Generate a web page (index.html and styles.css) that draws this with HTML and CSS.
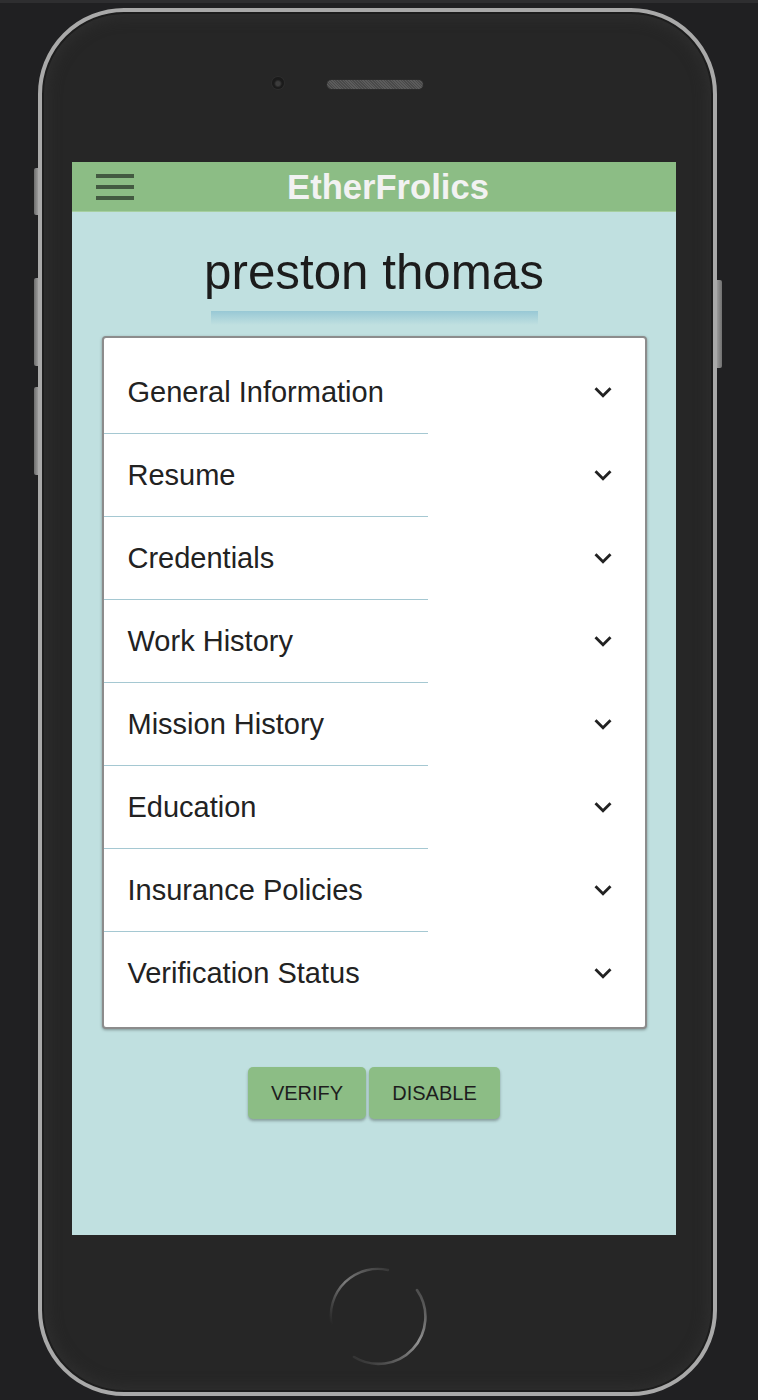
FILE: index.html
```html
<!DOCTYPE html>
<html>
<head>
<meta charset="utf-8">
<link rel="stylesheet" href="styles.css">
</head>
<body>
<div class="topstrip"></div>
<div class="phone">
  <div class="side side-l1"></div>
  <div class="side side-l2"></div>
  <div class="side side-l3"></div>
  <div class="side side-r1"></div>
  <div class="phone-top">
    <div class="camera"></div>
    <div class="speaker"></div>
  </div>
  <div class="screen">
    <header class="appbar">
      <div class="hamburger"><span></span><span></span><span></span></div>
      <div class="brand">EtherFrolics</div>
    </header>
    <main class="content">
      <h1 class="name">preston thomas</h1>
      <div class="name-bar"></div>
      <div class="card">
        <div class="item"><span class="label">General Information</span><svg class="chev" viewBox="0 0 24 24"><path d="M16.59 8.59L12 13.17 7.41 8.59 6 10l6 6 6-6z"/></svg></div>
        <div class="item"><span class="label">Resume</span><svg class="chev" viewBox="0 0 24 24"><path d="M16.59 8.59L12 13.17 7.41 8.59 6 10l6 6 6-6z"/></svg></div>
        <div class="item"><span class="label">Credentials</span><svg class="chev" viewBox="0 0 24 24"><path d="M16.59 8.59L12 13.17 7.41 8.59 6 10l6 6 6-6z"/></svg></div>
        <div class="item"><span class="label">Work History</span><svg class="chev" viewBox="0 0 24 24"><path d="M16.59 8.59L12 13.17 7.41 8.59 6 10l6 6 6-6z"/></svg></div>
        <div class="item"><span class="label">Mission History</span><svg class="chev" viewBox="0 0 24 24"><path d="M16.59 8.59L12 13.17 7.41 8.59 6 10l6 6 6-6z"/></svg></div>
        <div class="item"><span class="label">Education</span><svg class="chev" viewBox="0 0 24 24"><path d="M16.59 8.59L12 13.17 7.41 8.59 6 10l6 6 6-6z"/></svg></div>
        <div class="item"><span class="label">Insurance Policies</span><svg class="chev" viewBox="0 0 24 24"><path d="M16.59 8.59L12 13.17 7.41 8.59 6 10l6 6 6-6z"/></svg></div>
        <div class="item"><span class="label">Verification Status</span><svg class="chev" viewBox="0 0 24 24"><path d="M16.59 8.59L12 13.17 7.41 8.59 6 10l6 6 6-6z"/></svg></div>
      </div>
      <div class="actions">
        <button class="btn btn-verify">VERIFY</button>
        <button class="btn btn-disable">DISABLE</button>
      </div>
    </main>
  </div>
  <div class="phone-bottom">
    <svg class="home" viewBox="0 0 100 100">
      <defs>
        <linearGradient id="g1" x1="0" y1="1" x2="1" y2="0">
          <stop offset="0" stop-color="#6a6a6a" stop-opacity="0"/>
          <stop offset="0.5" stop-color="#7c7c7c"/>
          <stop offset="1" stop-color="#7c7c7c" stop-opacity="0.2"/>
        </linearGradient>
        <linearGradient id="g2" x1="1" y1="0" x2="0" y2="1">
          <stop offset="0" stop-color="#8a8a8a" stop-opacity="0.3"/>
          <stop offset="0.4" stop-color="#939393"/>
          <stop offset="1" stop-color="#7a7a7a" stop-opacity="0.1"/>
        </linearGradient>
      </defs>
      <path d="M3.5 58 A47 47 0 0 1 60 4" fill="none" stroke="url(#g1)" stroke-width="2.4" stroke-linecap="round"/>
      <path d="M89 24 A47 47 0 0 1 26 91" fill="none" stroke="url(#g2)" stroke-width="2.6" stroke-linecap="round"/>
    </svg>
  </div>
</div>
</body>
</html>
```
FILE: styles.css
```css
html, body {
  margin: 0;
  padding: 0;
}
body {
  background: #202022;
  width: 758px;
  height: 1400px;
  overflow: hidden;
  font-family: "Liberation Sans", Arial, sans-serif;
}
.topstrip {
  height: 3px;
  background: #2e2e30;
}
.phone {
  position: relative;
  box-sizing: border-box;
  margin: 5px 0 0 38px;
  width: 679px;
  height: 1388px;
  border: 4px solid #a9a9a9;
  border-radius: 86px;
  background: #262626;
  box-shadow: inset 0 0 0 2px #1d1d1d, inset 0 0 14px 5px #2f2f2f;
}
.side {
  position: absolute;
  width: 4px;
  background: linear-gradient(to right, #6e6e6e, #9a9a9a);
  border-radius: 2px 0 0 2px;
}
.side-l1 { left: -8px; top: 156px; height: 47px; }
.side-l2 { left: -8px; top: 266px; height: 88px; }
.side-l3 { left: -8px; top: 375px; height: 88px; }
.side-r1 {
  right: -9px;
  top: 268px;
  height: 88px;
  width: 5px;
  border-radius: 0 2px 2px 0;
  background: linear-gradient(to right, #9a9a9a, #707070);
}
.phone-top {
  height: 150px;
  box-sizing: border-box;
  padding: 65px 0 0 230px;
  display: flex;
  align-items: flex-start;
  gap: 43px;
}
.camera {
  width: 12px;
  height: 12px;
  border-radius: 50%;
  background: radial-gradient(circle at 50% 55%, #3c3c3c 0 22%, #1c1c1c 45%, #161616 100%);
  box-shadow: 0 0 0 1px #2d2d2d;
}
.speaker {
  margin-top: 3px;
  width: 96px;
  height: 9px;
  border-radius: 5px;
  background: repeating-linear-gradient(45deg, #4a4a4a 0 1px, #5c5c5c 1px 2px);
  box-shadow: 0 0 0 1px #2a2a2a;
}
.screen {
  margin-left: 30px;
  width: 604px;
  height: 1073px;
  display: flex;
  flex-direction: column;
  background: #c0e0e0;
}
.appbar {
  height: 49px;
  flex: none;
  display: flex;
  align-items: center;
  padding: 0 24px;
  background: #8cbd85;
  border-bottom: 1px solid #a6cf9f;
}
.hamburger {
  width: 38px;
  display: flex;
  flex-direction: column;
  gap: 7px;
}
.hamburger span {
  display: block;
  height: 4px;
  background: #435a41;
}
.brand {
  flex: 1;
  margin-right: 10px;
  text-align: center;
  font-size: 34.6px;
  font-weight: bold;
  color: #f2f2f2;
  line-height: 40px;
}
.content {
  flex: 1;
  display: flex;
  flex-direction: column;
  align-items: center;
}
.name {
  margin: 35px 0 0;
  font-size: 49.3px;
  font-weight: normal;
  line-height: 50px;
  color: #1c1c1c;
}
.name-bar {
  margin-top: 14px;
  width: 327px;
  height: 14px;
  background: linear-gradient(to bottom, #98c8d5, rgba(192, 224, 224, 0));
}
.card {
  margin-top: 11px;
  box-sizing: border-box;
  width: 545px;
  padding: 13px 0;
  background: #ffffff;
  border: 2px solid #8c8c8c;
  border-radius: 4px;
  box-shadow: 0 1px 3px rgba(0, 0, 0, 0.35);
}
.item {
  position: relative;
  height: 82px;
  display: flex;
  align-items: center;
  justify-content: space-between;
  padding: 0 25px 0 24px;
}
.item::after {
  content: "";
  position: absolute;
  left: 0;
  bottom: -1px;
  width: 60%;
  height: 1px;
  background: #a5c8d2;
}
.item + .item {
  margin-top: 1px;
}
.item:last-child::after {
  display: none;
}
.label {
  font-size: 29px;
  color: #222222;
}
.chev {
  width: 34px;
  height: 34px;
  fill: #222222;
}
.actions {
  margin-top: 38px;
  display: flex;
  gap: 3px;
}
.btn {
  height: 52px;
  border: none;
  border-radius: 5px;
  background: #8cbd85;
  font-family: "Liberation Sans", Arial, sans-serif;
  font-size: 20px;
  color: #1e1e1e;
  box-shadow: 0 2px 3px rgba(0, 0, 0, 0.3);
  padding: 0;
}
.btn-verify { width: 118px; }
.btn-disable { width: 131px; }
.phone-bottom {
  display: flex;
  justify-content: center;
  padding-top: 31px;
}
.home {
  width: 100px;
  height: 100px;
}
```
